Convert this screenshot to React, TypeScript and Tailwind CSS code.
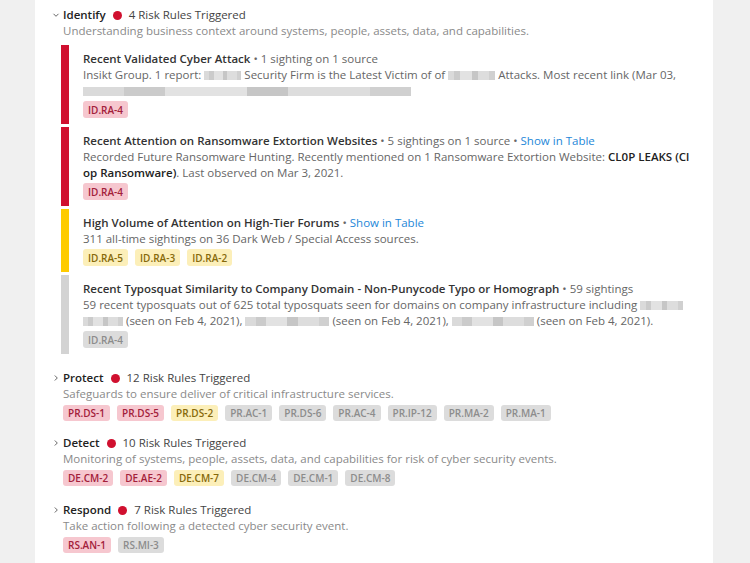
import React from "react";

type Tone = "red" | "yellow" | "gray";

const tagTone: Record<Tone, string> = {
  red: "bg-[#f6c7cf] text-[#a3203a]",
  yellow: "bg-[#fcefb9] text-[#86690a]",
  gray: "bg-[#dcdcdc] text-[#8c8c8c]",
};

const barTone: Record<Tone, string> = {
  red: "bg-[#d0102f]",
  yellow: "bg-[#fecb00]",
  gray: "bg-[#d3d3d3]",
};

function Tag({ label, tone, tall }: { label: string; tone: Tone; tall?: boolean }) {
  return (
    <span
      className={`inline-flex items-center rounded-[3px] px-[5px] text-[10px] font-semibold leading-none ${
        tall ? "h-[17px]" : "h-[16px]"
      } ${tagTone[tone]}`}
    >
      {label}
    </span>
  );
}

function Tags({ items, tall }: { items: [string, Tone][]; tall?: boolean }) {
  return (
    <div className="flex gap-[7px]">
      {items.map(([label, tone]) => (
        <Tag key={label} label={label} tone={tone} tall={tall} />
      ))}
    </div>
  );
}

// pixelated stand-in for the redacted names in the screenshot
function Redact({ className }: { className: string }) {
  return (
    <span className={`inline-flex h-[9px] translate-y-[1px] overflow-hidden align-baseline ${className}`}>
      <span className="h-full flex-1 bg-[#dadada]" />
      <span className="h-full flex-1 bg-[#cbcbcb]" />
      <span className="h-full flex-[2] bg-[#e2e2e2]" />
      <span className="h-full flex-1 bg-[#c6c6c6]" />
      <span className="h-full flex-[2] bg-[#dddddd]" />
      <span className="h-full flex-1 bg-[#d0d0d0]" />
    </span>
  );
}

function Chevron({ open }: { open: boolean }) {
  return (
    <svg width="8" height="8" viewBox="0 0 8 8" className="shrink-0 text-[#666]">
      {open ? (
        <path d="M1.5 2.8 L4 5.3 L6.5 2.8" fill="none" stroke="currentColor" strokeWidth="1" />
      ) : (
        <path d="M2.8 1.5 L5.3 4 L2.8 6.5" fill="none" stroke="currentColor" strokeWidth="1" />
      )}
    </svg>
  );
}

function SectionHead({ name, count, open }: { name: string; count: number; open: boolean }) {
  return (
    <div className="flex h-[16px] items-center">
      <Chevron open={open} />
      <span className="ml-[3px] font-semibold text-[#222]">{name}</span>
      <span className="ml-[7px] h-[9px] w-[9px] rounded-full bg-[#d0102f]" />
      <span className="ml-[7px] text-[#444]">{count} Risk Rules Triggered</span>
    </div>
  );
}

function Item({ tone, children, tags }: { tone: Tone; children: React.ReactNode; tags: [string, Tone][] }) {
  return (
    <div className="flex">
      <div className={`w-[8px] shrink-0 ${barTone[tone]}`} />
      <div className="pl-[14px] pt-[6px] pb-[6px]">
        {children}
        <div className="mt-[2px]">
          <Tags items={tags} tall />
        </div>
      </div>
    </div>
  );
}

function Title({ text, meta, link }: { text: string; meta?: string; link?: boolean }) {
  return (
    <div className="whitespace-nowrap">
      <span className="font-semibold text-[#333]">{text}</span>
      {meta && <span className="text-[#666]"> • {meta}</span>}
      {link && (
        <>
          <span className="text-[#666]"> • </span>
          <span className="text-[#2487d8]">Show in Table</span>
        </>
      )}
    </div>
  );
}

export default function App() {
  return (
    <div className="min-h-screen bg-[#f0f0f0] pl-[35px] pr-[37px] font-['Open_Sans',sans-serif] text-[11.5px] leading-[16px]">
      <div className="min-h-[563px] bg-white pl-[17px] pr-[16px] pt-[7px] pb-[10px]">
        <section>
          <SectionHead name="Identify" count={4} open />
          <p className="pl-[11px] text-[#8a8a8a]">
            Understanding business context around systems, people, assets, data, and capabilities.
          </p>
          <div className="mt-[6px] ml-[9px] flex flex-col gap-[3px] text-[#666]">
            <Item tone="red" tags={[["ID.RA-4", "red"]]}>
              <Title text="Recent Validated Cyber Attack" meta="1 sighting on 1 source" />
              <div className="whitespace-nowrap">
                Insikt Group. 1 report: <Redact className="w-[37px]" /> Security Firm is the Latest Victim of of{" "}
                <Redact className="w-[47px]" /> Attacks. Most recent link (Mar 03,
              </div>
              <div className="whitespace-nowrap">
                <Redact className="w-[328px]" />
              </div>
            </Item>
            <Item tone="red" tags={[["ID.RA-4", "red"]]}>
              <Title text="Recent Attention on Ransomware Extortion Websites" meta="5 sightings on 1 source" link />
              <div className="whitespace-nowrap">
                Recorded Future Ransomware Hunting. Recently mentioned on 1 Ransomware Extortion Website:{" "}
                <b className="font-semibold text-[#222]">CL0P LEAKS (Cl</b>
              </div>
              <div className="whitespace-nowrap">
                <b className="font-semibold text-[#222]">op Ransomware)</b>. Last observed on Mar 3, 2021.
              </div>
            </Item>
            <Item
              tone="yellow"
              tags={[
                ["ID.RA-5", "yellow"],
                ["ID.RA-3", "yellow"],
                ["ID.RA-2", "yellow"],
              ]}
            >
              <Title text="High Volume of Attention on High-Tier Forums" link />
              <div className="whitespace-nowrap">311 all-time sightings on 36 Dark Web / Special Access sources.</div>
            </Item>
            <Item tone="gray" tags={[["ID.RA-4", "gray"]]}>
              <Title text="Recent Typosquat Similarity to Company Domain - Non-Punycode Typo or Homograph" meta="59 sightings" />
              <div className="whitespace-nowrap">
                59 recent typosquats out of 625 total typosquats seen for domains on company infrastructure including{" "}
                <Redact className="w-[43px]" />
              </div>
              <div className="whitespace-nowrap">
                <Redact className="w-[40px]" /> (seen on Feb 4, 2021), <Redact className="w-[84px]" /> (seen on Feb 4, 2021),{" "}
                <Redact className="w-[82px]" /> (seen on Feb 4, 2021).
              </div>
            </Item>
          </div>
        </section>

        <section className="mt-[16px]">
          <SectionHead name="Protect" count={12} open={false} />
          <p className="pl-[11px] text-[#8a8a8a]">Safeguards to ensure deliver of critical infrastructure services.</p>
          <div className="mt-[3px] pl-[11px]">
            <Tags
              items={[
                ["PR.DS-1", "red"],
                ["PR.DS-5", "red"],
                ["PR.DS-2", "yellow"],
                ["PR.AC-1", "gray"],
                ["PR.DS-6", "gray"],
                ["PR.AC-4", "gray"],
                ["PR.IP-12", "gray"],
                ["PR.MA-2", "gray"],
                ["PR.MA-1", "gray"],
              ]}
            />
          </div>
        </section>

        <section className="mt-[14px]">
          <SectionHead name="Detect" count={10} open={false} />
          <p className="pl-[11px] text-[#8a8a8a]">
            Monitoring of systems, people, assets, data, and capabilities for risk of cyber security events.
          </p>
          <div className="mt-[3px] pl-[11px]">
            <Tags
              items={[
                ["DE.CM-2", "red"],
                ["DE.AE-2", "red"],
                ["DE.CM-7", "yellow"],
                ["DE.CM-4", "gray"],
                ["DE.CM-1", "gray"],
                ["DE.CM-8", "gray"],
              ]}
            />
          </div>
        </section>

        <section className="mt-[16px]">
          <SectionHead name="Respond" count={7} open={false} />
          <p className="pl-[11px] text-[#8a8a8a]">Take action following a detected cyber security event.</p>
          <div className="mt-[3px] pl-[11px]">
            <Tags
              items={[
                ["RS.AN-1", "red"],
                ["RS.MI-3", "gray"],
              ]}
            />
          </div>
        </section>
      </div>
    </div>
  );
}
